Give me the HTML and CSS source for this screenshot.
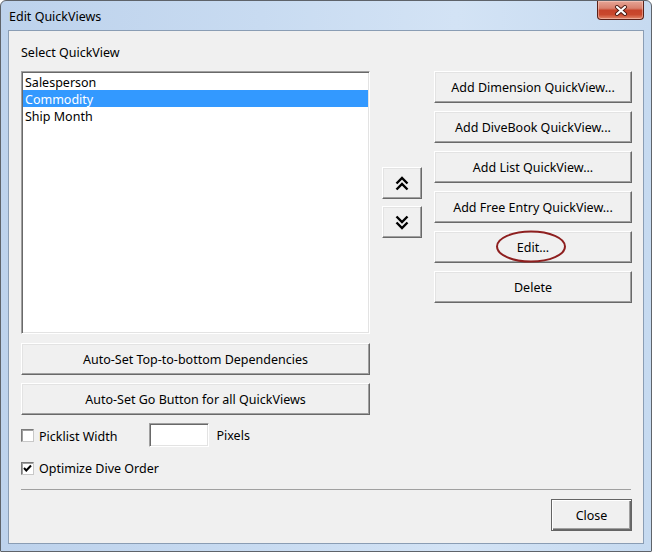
FILE: index.html
```html
<!DOCTYPE html>
<html>
<head>
<meta charset="utf-8">
<link rel="stylesheet" href="styles.css">
</head>
<body>
<div class="window">
  <div class="titlebar">
    <span class="title">Edit QuickViews</span>
    <div class="close-x">
      <svg width="14" height="11" viewBox="0 0 14 11">
        <path d="M3 2 L11 9 M11 2 L3 9" stroke="#4a1a12" stroke-width="4" stroke-linecap="round"/>
        <path d="M3 2 L11 9 M11 2 L3 9" stroke="#ffffff" stroke-width="2.2" stroke-linecap="round"/>
      </svg>
    </div>
  </div>
  <div class="client">
    <div class="main">
      <div class="left">
        <div class="label">Select QuickView</div>
        <div class="listbox">
          <div class="item">Salesperson</div>
          <div class="item selected">Commodity</div>
          <div class="item">Ship Month</div>
        </div>
        <div class="btn wide first">Auto-Set Top-to-bottom Dependencies</div>
        <div class="btn wide">Auto-Set Go Button for all QuickViews</div>
      </div>
      <div class="arrows">
        <div class="btn arrow">
          <svg width="14" height="17" viewBox="0 0 14 17">
            <path d="M1.5 8.5 L7 3 L12.5 8.5 M1.5 14.5 L7 9 L12.5 14.5" fill="none" stroke="#000" stroke-width="2.4"/>
          </svg>
        </div>
        <div class="btn arrow">
          <svg width="14" height="17" viewBox="0 0 14 17">
            <path d="M1.5 2.5 L7 8 L12.5 2.5 M1.5 8.5 L7 14 L12.5 8.5" fill="none" stroke="#000" stroke-width="2.4"/>
          </svg>
        </div>
      </div>
      <div class="right">
        <div class="btn">Add Dimension QuickView...</div>
        <div class="btn">Add DiveBook QuickView...</div>
        <div class="btn">Add List QuickView...</div>
        <div class="btn">Add Free Entry QuickView...</div>
        <div class="btn edit">Edit...
          <svg class="ring" width="72" height="33" viewBox="0 0 72 33">
            <ellipse cx="36" cy="16.5" rx="34" ry="15" fill="none" stroke="#8e1f1f" stroke-width="2"/>
          </svg>
        </div>
        <div class="btn">Delete</div>
      </div>
    </div>
    <div class="options">
      <div class="opt-row picklist">
        <span class="check"></span>
        <span class="opt-label">Picklist Width</span>
        <span class="textbox"></span>
        <span class="pixels">Pixels</span>
      </div>
      <div class="opt-row optimize">
        <span class="check">
          <svg width="11" height="11" viewBox="0 0 11 11">
            <path d="M2 5 L4.3 7.5 L9 2.5" fill="none" stroke="#000" stroke-width="2"/>
          </svg>
        </span>
        <span class="opt-label">Optimize Dive Order</span>
      </div>
    </div>
    <div class="separator"></div>
    <div class="footer">
      <div class="btn default">Close</div>
    </div>
  </div>
</div>
</body>
</html>
```
FILE: styles.css
```css
* { box-sizing: border-box; }
html, body { margin: 0; padding: 0; background: #ffffff; }
body {
  font-family: "Noto Sans", "Open Sans", "DejaVu Sans", sans-serif;
  font-size: 12.5px;
  color: #000;
}
.window {
  width: 652px;
  height: 552px;
  border: 1px solid #5e636a;
  border-radius: 6px 6px 1px 1px;
  padding: 0 7px 7px 7px;
  background: linear-gradient(to right, #bdd2ec 0%, #c8dbf1 40%, #d3e3f5 70%, #c6daf0 100%);
  display: flex;
  flex-direction: column;
}
.titlebar {
  height: 29px;
  display: flex;
  justify-content: space-between;
  align-items: flex-start;
}
.title {
  padding-top: 8px;
  padding-left: 1px;
  line-height: 16px;
}
.close-x {
  width: 47px;
  height: 19px;
  border: 1px solid #5a2118;
  border-top: none;
  border-radius: 0 0 4px 4px;
  background: linear-gradient(#e6a596 0%, #d9816e 40%, #c6432a 52%, #c9482d 75%, #e2876a 100%);
  display: flex;
  align-items: center;
  justify-content: center;
  box-shadow: inset 0 0 0 1px rgba(255,220,210,0.45);
}
.close-x svg { display: block; }
.client {
  flex: 1;
  border: 1px solid #8a9db4;
  background: #f0f0f0;
  padding: 13px 11px 11px 12px;
  display: flex;
  flex-direction: column;
}
.main {
  display: grid;
  grid-template-columns: 349px 40px 198px;
  column-gap: 12px;
}
.left { display: flex; flex-direction: column; }
.label { line-height: 15px; height: 15px; padding-top: 1px; margin-bottom: 12px; }
.listbox {
  height: 263px;
  background: #fff;
  border: 1px solid;
  border-color: #a0a0a0 #ffffff #ffffff #a0a0a0;
  box-shadow: inset 1px 1px 0 #696969, inset -1px -1px 0 #e3e3e3;
  padding: 1px;
}
.item {
  height: 17px;
  line-height: 15px;
  padding-top: 2px;
  padding-left: 2px;
}
.item.selected { background: #3399ff; color: #fff; }
.btn {
  height: 32px;
  background: #f0f0f0;
  border: 1px solid;
  border-color: #ffffff #696969 #696969 #ffffff;
  box-shadow: inset -1px -1px 0 #a0a0a0, inset 1px 1px 0 #e3e3e3;
  display: flex;
  align-items: center;
  justify-content: center;
  line-height: 16px;
  padding-top: 2px;
}
.wide.first { margin-top: 9px; }
.wide { margin-top: 8px; }
.arrows {
  padding-top: 123px;
  display: flex;
  flex-direction: column;
  gap: 7px;
}
.btn.arrow { padding-top: 0; }
.arrow svg { display: block; }
.right {
  padding-top: 27px;
  display: flex;
  flex-direction: column;
  gap: 8px;
}
.edit { position: relative; }
.ring {
  position: absolute;
  left: 60px;
  top: -2px;
}
.options { display: flex; flex-direction: column; }
.opt-row { display: flex; align-items: center; }
.picklist { margin-top: 8px; height: 24px; }
.optimize { margin-top: 14px; height: 15px; }
.check {
  width: 13px;
  height: 13px;
  background: #fff;
  border: 1px solid;
  border-color: #7a7a7a #c8c8c8 #c8c8c8 #7a7a7a;
  box-shadow: inset 1px 1px 0 #a0a0a0;
  display: flex;
  align-items: center;
  justify-content: center;
}
.check svg { display: block; }
.opt-label { margin-left: 5px; padding-top: 1px; }
.picklist .opt-label { padding-top: 2px; }
.optimize .opt-label { padding-top: 0; }
.textbox {
  width: 60px;
  height: 24px;
  margin-left: 32px;
  background: #fff;
  border: 1px solid;
  border-color: #a0a0a0 #ffffff #ffffff #a0a0a0;
  box-shadow: inset 1px 1px 0 #696969, inset -1px -1px 0 #e3e3e3;
}
.pixels { margin-left: 7px; padding-top: 1px; }
.separator {
  margin-top: 13px;
  height: 1px;
  width: 610px;
  background: #a0a0a0;
}
.footer {
  margin-top: 9px;
  display: flex;
  justify-content: flex-end;
}
.btn.default {
  width: 81px;
  height: 32px;
  border: 1px solid #646464;
  box-shadow: inset 1px 1px 0 #ffffff, inset -1px -1px 0 #696969, inset -2px -2px 0 #a0a0a0;
}
```
